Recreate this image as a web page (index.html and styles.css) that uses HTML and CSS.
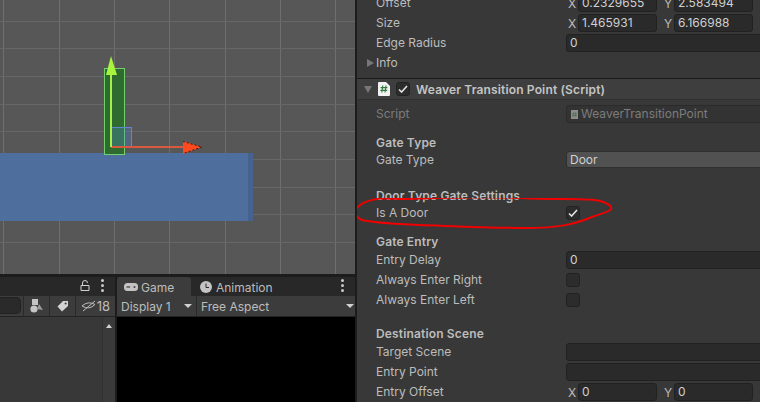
FILE: index.html
```html
<!DOCTYPE html>
<html lang="en">
<head>
  <meta charset="UTF-8">
  <title>Weaver Transition Point</title>
  <link rel="stylesheet" href="styles.css">
</head>
<body>
  <div class="editor">
    <div class="left-col">
      <div class="scene">
        <svg class="scene-art" width="355" height="274" viewBox="0 0 355 274">
          <g stroke="#6e6e6e" stroke-width="1">
            <path d="M3.5 0V274M59.5 0V274M114.5 0V274M169.5 0V274M225.5 0V274M280.5 0V274M335.5 0V274"/>
          </g>
          <g stroke="#676767" stroke-width="1">
            <path d="M0 21.5H355M0 48.5H355M0 76.5H355M0 104.5H355M0 131.5H355M0 159.5H355M0 187.5H355M0 214.5H355M0 242.5H355"/>
          </g>
          <rect x="0" y="153" width="248" height="68" fill="#4e70a3" fill-opacity="0.94"/>
          <rect x="248" y="153" width="5" height="68" fill="#466390"/>
          <rect x="104.500" y="68.500" width="20" height="86" fill="#2f6a2f" stroke="#72d070"/>
          <rect x="111.500" y="127.500" width="20" height="20" fill="#4f86d8" fill-opacity="0.3" stroke="#5f86d0"/>
          <rect x="111" y="146" width="73" height="2" fill="#d9593f"/>
          <polygon points="183,141 202,147 183,154" fill="#ff4a20"/>
          <path d="M183 141.500L202 147L183 153.500" fill="none" stroke="#3a1a10" stroke-dasharray="2 2"/>
          <rect x="110" y="74" width="2" height="73" fill="#a5f04c"/>
          <polygon points="111,56 106,75 117,75" fill="#a8f53e"/>
        </svg>
      </div>
      <div class="panels">
        <div class="hierarchy">
          <div class="tabbar">
            <svg class="lock-icon" width="10" height="11" viewBox="0 0 10 11"><path d="M1 5.500H9V10.500H1ZM2.500 5V3Q2.500 0.500 5 0.500Q7.500 0.500 7.500 3" fill="none" stroke="#d0d0d0"/></svg>
            <span class="dots"><i></i><i></i><i></i></span>
          </div>
          <div class="toolbar hierarchy-tools">
            <div class="search"></div>
            <div class="tool-btn tool-shapes">
              <svg width="14" height="14" viewBox="0 0 14 14"><rect x="2" y="0" width="6" height="6" fill="#c4c4c4"/><circle cx="4" cy="10" r="3.600" fill="#c4c4c4"/><polygon points="9,5 13,11 7,10" fill="#9a9a9a"/></svg>
            </div>
            <div class="tool-btn tool-tag">
              <svg width="12" height="12" viewBox="0 0 12 12"><path d="M6 1H11V6L5 11.500L0.500 6.500Z" fill="#d4d4d4"/><circle cx="8.600" cy="3.400" r="1" fill="#3c3c3c"/></svg>
            </div>
            <div class="tool-btn tool-hidden">
              <svg width="15" height="12" viewBox="0 0 15 12"><path d="M1 6Q7 0.500 14 4.500Q8 10.500 1 6ZM2 11L14 1" fill="none" stroke="#bdbdbd"/></svg>
              <span>18</span>
            </div>
          </div>
          <div class="list">
            <div class="scrollbar"><b class="arrow-up"></b></div>
          </div>
        </div>
        <div class="game">
          <div class="tabbar">
            <div class="tab tab-active">
              <svg width="14" height="8" viewBox="0 0 14 8"><rect x="0" y="0" width="14" height="8" rx="3.500" fill="#c4c4c4"/><rect x="2.500" y="3.400" width="3.600" height="1.200" fill="#3c3c3c"/><circle cx="10.500" cy="4" r="1" fill="#3c3c3c"/></svg>
              <span>Game</span>
            </div>
            <div class="tab">
              <svg width="12" height="12" viewBox="0 0 12 12"><circle cx="6" cy="6" r="6" fill="#c4c4c4"/><path d="M6 2.500V6.500H9" fill="none" stroke="#2a2a2a"/></svg>
              <span>Animation</span>
            </div>
            <span class="dots"><i></i><i></i><i></i></span>
          </div>
          <div class="toolbar game-tools">
            <div class="drop drop-display"><span>Display 1</span><b class="arrow-down"></b></div>
            <div class="drop drop-aspect"><span>Free Aspect</span><b class="arrow-down"></b></div>
          </div>
          <div class="game-view"></div>
        </div>
      </div>
    </div>

    <div class="inspector">
      <div class="row">
        <label>Offset</label>
        <div class="vector"><em>X</em><div class="field">0.2329655</div><em>Y</em><div class="field">2.583494</div></div>
      </div>
      <div class="row">
        <label>Size</label>
        <div class="vector"><em>X</em><div class="field">1.465931</div><em>Y</em><div class="field">6.166988</div></div>
      </div>
      <div class="row">
        <label>Edge Radius</label>
        <div class="field wide">0</div>
      </div>
      <div class="row foldout"><b class="arrow-right"></b><label>Info</label></div>

      <div class="comp-header">
        <b class="arrow-open"></b>
        <svg class="script-icon" width="12" height="14" viewBox="0 0 12 14"><path d="M0 1Q0 0 1 0H8L12 4V13Q12 14 11 14H1Q0 14 0 13Z" fill="#f2f2f2"/><path d="M4.800 3.500L3.800 10.500M8 3.500L7 10.500M2.600 5.600H9.400M2.400 8.400H9.200" fill="none" stroke="#2f7a3a" stroke-width="1.100"/></svg>
        <div class="check"><svg width="10" height="8" viewBox="0 0 10 8"><path d="M1 4.500L3.600 7L9 1" fill="none" stroke="#e4e4e4" stroke-width="1.600"/></svg></div>
        <strong>Weaver Transition Point (Script)</strong>
      </div>

      <div class="row row-script dim">
        <label>Script</label>
        <div class="field wide script-field">
          <svg width="7" height="9" viewBox="0 0 7 9"><rect width="7" height="9" fill="#8b8b8b"/><path d="M2.600 2L2 7M4.800 2L4.200 7M1 3.800H6M1 5.400H6" stroke="#4f6f55" stroke-width="0.700"/></svg>
          <span>WeaverTransitionPoint</span>
        </div>
      </div>

      <h4 class="heading gap-gate-type">Gate Type</h4>
      <div class="row">
        <label>Gate Type</label>
        <div class="field wide popup">Door</div>
      </div>

      <h4 class="heading gap-large">Door Type Gate Settings</h4>
      <div class="row">
        <label>Is A Door</label>
        <div class="check"><svg width="10" height="8" viewBox="0 0 10 8"><path d="M1 4.500L3.600 7L9 1" fill="none" stroke="#e4e4e4" stroke-width="1.600"/></svg></div>
      </div>

      <h4 class="heading gap-small">Gate Entry</h4>
      <div class="row">
        <label>Entry Delay</label>
        <div class="field wide">0</div>
      </div>
      <div class="row"><label>Always Enter Right</label><div class="check"></div></div>
      <div class="row"><label>Always Enter Left</label><div class="check"></div></div>

      <h4 class="heading gap-dest">Destination Scene</h4>
      <div class="row"><label>Target Scene</label><div class="field wide"></div></div>
      <div class="row"><label>Entry Point</label><div class="field wide"></div></div>
      <div class="row">
        <label>Entry Offset</label>
        <div class="vector"><em>X</em><div class="field">0</div><em>Y</em><div class="field">0</div></div>
      </div>

      <svg class="scribble" width="270" height="40" viewBox="355 198 270 40">
        <path d="M403 199C430 198 480 196 522 198C555 200 590 198 600 201C610 204 612 207 611 209C609 212 600 214 592 217C575 224 560 228 525 228C490 228 450 226 420 225C395 224 375 223 362 220C356 218 355 213 356 210C358 205 366 200 380 198.500C388 198 396 199 403 199" fill="none" stroke="#f00000" stroke-width="2"/>
      </svg>
    </div>
  </div>
</body>
</html>
```

FILE: styles.css
```css
* {
  box-sizing: border-box;
}
html, body {
  margin: 0;
  padding: 0;
}
body {
  width: 760px;
  height: 402px;
  overflow: hidden;
  background: #1c1c1c;
  font-family: Inter, "Noto Sans", sans-serif;
  font-size: 12px;
  color: #bcbcbc;
}
.editor {
  display: flex;
  height: 402px;
}
.left-col {
  width: 355px;
  display: flex;
  flex-direction: column;
}
.scene {
  height: 274px;
  background: #575757;
}
.scene-art {
  display: block;
}
.panels {
  display: flex;
  gap: 2px;
  margin-top: 3px;
  flex: 1;
  min-height: 0;
}
.hierarchy {
  width: 115px;
  display: flex;
  flex-direction: column;
}
.game {
  flex: 1;
  display: flex;
  flex-direction: column;
}
.tabbar {
  height: 19px;
  background: #282828;
  display: flex;
  align-items: center;
  flex-shrink: 0;
}
.hierarchy .tabbar {
  justify-content: flex-end;
  padding-right: 11px;
  gap: 11px;
}
.lock-icon {
  display: block;
  margin-top: -2px;
}
.dots {
  display: flex;
  flex-direction: column;
  gap: 2px;
  margin-top: -2px;
}
.dots i {
  width: 3px;
  height: 3px;
  background: #c8c8c8;
  border-radius: 50%;
}
.toolbar {
  height: 21px;
  background: #3c3c3c;
  border-bottom: 1px solid #232323;
  display: flex;
  flex-shrink: 0;
}
.search {
  width: 21px;
  height: 17px;
  margin: 1px 2px 0 0;
  background: #2a2a2a;
  border: 1px solid #212121;
  border-left: 0;
  border-radius: 0 5px 5px 0;
}
.tool-btn {
  display: flex;
  align-items: center;
  justify-content: center;
  border-left: 1px solid #2a2a2a;
}
.tool-shapes,
.tool-tag {
  width: 26px;
}
.tool-hidden {
  width: 40px;
  gap: 1px;
  font-size: 13px;
}
.list {
  flex: 1;
  background: #383838;
  display: flex;
  justify-content: flex-end;
}
.scrollbar {
  width: 13px;
  background: #3a3a3a;
  border-left: 1px solid #313131;
  padding-top: 7px;
  display: flex;
  justify-content: center;
  align-items: flex-start;
}
.arrow-up {
  border: 3.5px solid transparent;
  border-top: 0;
  border-bottom: 4px solid #d2d2d2;
}
.game .tabbar .dots {
  margin-left: auto;
  margin-right: 11px;
}
.tab {
  height: 19px;
  display: flex;
  align-items: center;
  gap: 3px;
  padding: 1px 0 0 7px;
  width: 74px;
}
.tab + .tab {
  padding-left: 9px;
  gap: 4px;
  width: auto;
}
.tab-active {
  background: #3c3c3c;
  border-radius: 3px 3px 0 0;
}
.drop {
  display: flex;
  align-items: center;
  justify-content: space-between;
  padding: 0 4px;
}
.drop-display {
  width: 80px;
  border-right: 1px solid #2a2a2a;
}
.drop-aspect {
  flex: 1;
  padding-right: 1px;
}
.arrow-down {
  border: 4px solid transparent;
  border-bottom: 0;
  border-top: 4px solid #d2d2d2;
}
.game-view {
  flex: 1;
  background: #000;
}
.inspector {
  position: relative;
  width: 405px;
  margin-left: 2px;
  flex: 1;
  height: 402px;
  overflow: hidden;
  background: #383838;
}
.inspector > :first-child {
  margin-top: -7px;
}
.row {
  height: 20px;
  display: flex;
  align-items: center;
  padding-left: 19px;
  flex-shrink: 0;
}
.row label {
  width: 190px;
  flex-shrink: 0;
  padding-bottom: 1px;
  line-height: 14px;
}
.vector {
  display: flex;
  align-items: center;
  width: 186px;
}
.vector em {
  font-style: normal;
  width: 12px;
  padding-left: 2px;
  flex-shrink: 0;
}
.vector em + .field + em {
  width: 17px;
  padding-left: 7px;
}
.vector .field {
  width: 79px;
  flex-shrink: 0;
}
.field {
  height: 18px;
  line-height: 16px;
  background: #2a2a2a;
  border: 1px solid #212121;
  border-radius: 3px;
  padding-left: 3px;
  color: #d0d0d0;
}
.wide {
  width: 220px;
  flex-shrink: 0;
}
.popup {
  background: #515151;
  border-color: #303030;
  height: 17px;
  margin-top: -2px;
}
.foldout {
  padding-left: 10px;
}
.foldout label {
  margin-left: 2px;
}
.arrow-right {
  border: 4px solid transparent;
  border-right: 0;
  border-left: 7px solid #777;
}
.comp-header {
  height: 22px;
  margin-top: 5px;
  background: #3e3e3e;
  border-top: 1px solid #1a1a1a;
  border-bottom: 1px solid #303030;
  display: flex;
  align-items: center;
  padding-left: 7px;
}
.arrow-open {
  border: 4.5px solid transparent;
  border-bottom: 0;
  border-top: 7px solid #777;
  margin-right: 6px;
}
.script-icon {
  margin-right: 6px;
}
.check {
  width: 14px;
  height: 14px;
  background: #2c2c2c;
  border: 1px solid #222;
  border-radius: 3px;
  display: flex;
  align-items: center;
  justify-content: center;
  flex-shrink: 0;
}
.comp-header strong {
  margin-left: 6px;
  font-weight: 600;
  font-size: 12px;
  letter-spacing: 0.15px;
  color: #c4c4c4;
}
.row-script {
  margin-top: 4px;
}
.dim label {
  color: #7c7c7c;
}
.script-field {
  display: flex;
  align-items: center;
  gap: 3px;
  background: #333;
  border-color: #2b2b2b;
  color: #7c7c7c;
  padding-left: 4px;
}
.heading {
  height: 16px;
  line-height: 16px;
  margin: 0;
  padding-left: 19px;
  font-size: 12px;
  font-weight: 600;
  letter-spacing: 0.15px;
  color: #bcbcbc;
}
.gap-gate-type {
  margin-top: 11px;
  margin-bottom: -1px;
}
.gap-large {
  margin-top: 18px;
  margin-bottom: -1px;
}
.gap-small {
  margin-top: 11px;
}
.gap-dest {
  margin-top: 16px;
}
/* hand drawn circle over the inspector */
.scribble {
  position: absolute;
  left: -2px;
  top: 198px;
  pointer-events: none;
}
```
